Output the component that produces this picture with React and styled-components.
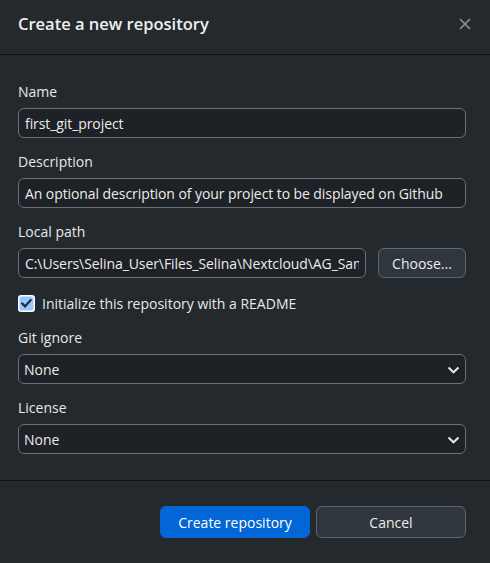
import React from "react";
import styled, { createGlobalStyle } from "styled-components";

const Global = createGlobalStyle`
  html, body { margin: 0; padding: 0; background: #24292e; }
  body { font-family: "Open Sans", "Noto Sans", sans-serif; color: #ececec; }
  * { box-sizing: border-box; }
`;

const Dialog = styled.div`
  width: 490px;
  height: 563px;
  background: #24292e;
  display: flex;
  flex-direction: column;
`;

const Header = styled.header`
  height: 55px;
  flex: none;
  padding: 0 15px 7px 18px;
  border-bottom: 1px solid #141414;
  display: flex;
  align-items: center;
  justify-content: space-between;
`;

const Title = styled.h1`
  margin: 0;
  font-size: 16.5px;
  font-weight: 600;
  color: #f0f0f0;
`;

const CloseButton = styled.button`
  width: 20px;
  height: 20px;
  padding: 0;
  border: none;
  background: transparent;
  color: #8b929a;
  display: flex;
  align-items: center;
  justify-content: center;
`;

const Body = styled.div`
  flex: 1;
  padding: 27px 24px 0 18px;
  display: flex;
  flex-direction: column;
`;

const Group = styled.div`
  display: flex;
  flex-direction: column;
  gap: 6px;
  margin-top: ${(p) => p.$mt ?? 14}px;
`;

const Label = styled.label`
  font-size: 14px;
  line-height: 20px;
  height: 20px;
  color: #e8e8e8;
`;

const TextInput = styled.input`
  width: 100%;
  height: 30px;
  padding: 0 6px;
  background: #1e2125;
  border: 1px solid #6a7079;
  border-radius: 6px;
  color: #ececec;
  font-family: inherit;
  font-size: 14px;
  letter-spacing: -0.08px;
  outline: none;
`;

const Row = styled.div`
  display: flex;
  gap: 12px;
`;

const Button = styled.button`
  height: ${(p) => p.$h || 30}px;
  width: ${(p) => p.$w}px;
  flex: none;
  border-radius: 6px;
  font-family: inherit;
  font-size: 14px;
  color: ${(p) => (p.$primary ? "#ffffff" : "#ececec")};
  background: ${(p) => (p.$primary ? "#0366d6" : "#2f363d")};
  border: 1px solid ${(p) => (p.$primary ? "#0366d6" : "#5f666e")};
  padding: 0;
`;

const CheckRow = styled.label`
  margin-top: 14px;
  height: 22px;
  display: flex;
  align-items: center;
  gap: 7px;
  font-size: 14px;
  color: #e8e8e8;
`;

const SelectWrap = styled.div`
  position: relative;
  height: 30px;
`;

const Select = styled.select`
  appearance: none;
  width: 100%;
  height: 30px;
  padding: 0 30px 0 5px;
  background: #1e2125;
  border: 1px solid #6a7079;
  border-radius: 6px;
  color: #ececec;
  font-family: inherit;
  font-size: 14px;
  outline: none;
`;

const Chevron = styled.svg`
  position: absolute;
  right: 6px;
  top: 12px;
  pointer-events: none;
`;

const Footer = styled.footer`
  height: 83px;
  flex: none;
  border-top: 1px solid #141414;
  padding: 25px 24px 0 0;
  display: flex;
  justify-content: flex-end;
  gap: 6px;
`;

function Check() {
  return (
    <svg width="17" height="17" viewBox="0 0 17 17">
      <rect x="0.75" y="0.75" width="15.5" height="15.5" rx="2.5" fill="#99c8ff" stroke="#ffffff" strokeWidth="1.5" />
      <path d="M4.2 8.6 L7 11.4 L12.6 5.2" fill="none" stroke="#1f2a36" strokeWidth="2.2" strokeLinecap="square" />
    </svg>
  );
}

function Field({ label, value, mt }) {
  return (
    <Group $mt={mt}>
      <Label>{label}</Label>
      <TextInput readOnly value={value} />
    </Group>
  );
}

function SelectField({ label }) {
  return (
    <Group>
      <Label>{label}</Label>
      <SelectWrap>
        <Select defaultValue="None">
          <option>None</option>
        </Select>
        <Chevron width="13" height="8" viewBox="0 0 13 8">
          <path d="M1.5 1.5 L6.5 6.3 L11.5 1.5" fill="none" stroke="#e8e8e8" strokeWidth="2" />
        </Chevron>
      </SelectWrap>
    </Group>
  );
}

export default function App() {
  return (
    <>
      <Global />
      <Dialog>
        <Header>
          <Title>Create a new repository</Title>
          <CloseButton aria-label="Close">
            <svg width="12" height="12" viewBox="0 0 12 12">
              <path d="M1 1 L11 11 M11 1 L1 11" stroke="currentColor" strokeWidth="1.6" />
            </svg>
          </CloseButton>
        </Header>
        <Body>
          <Field label="Name" value="first_git_project" mt={0} />
          <Field label="Description" value="An optional description of your project to be displayed on Github" />
          <Group>
            <Label>Local path</Label>
            <Row>
              <TextInput readOnly value="C:\Users\Selina_User\Files_Selina\Nextcloud\AG_Sammlung" />
              <Button $w={88}>Choose...</Button>
            </Row>
          </Group>
          <CheckRow>
            <Check />
            Initialize this repository with a README
          </CheckRow>
          <SelectField label="Git ignore" />
          <SelectField label="License" />
        </Body>
        <Footer>
          <Button $primary $w={150} $h={32}>Create repository</Button>
          <Button $w={150} $h={32}>Cancel</Button>
        </Footer>
      </Dialog>
    </>
  );
}
